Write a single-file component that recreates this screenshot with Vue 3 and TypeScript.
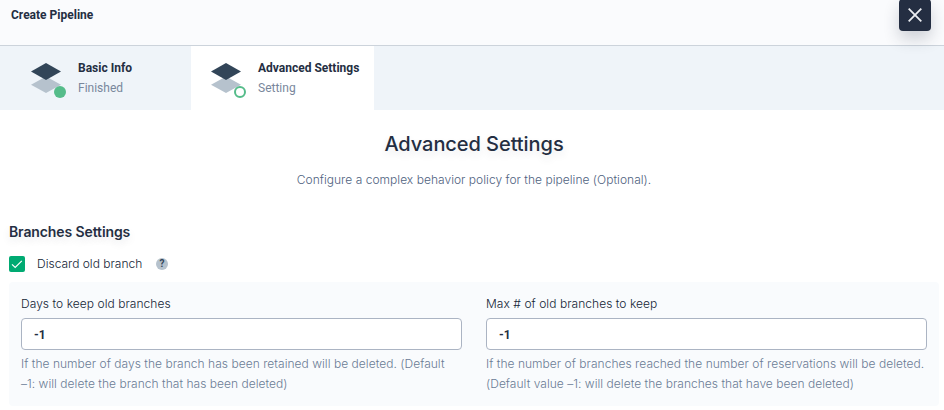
<script setup lang="ts">
import { ref } from 'vue'

interface Step {
  title: string
  status: string
  active: boolean
}

interface Field {
  label: string
  hint: string[]
}

const steps: Step[] = [
  { title: 'Basic Info', status: 'Finished', active: false },
  { title: 'Advanced Settings', status: 'Setting', active: true },
]

const fields: Field[] = [
  {
    label: 'Days to keep old branches',
    hint: [
      'If the number of days the branch has been retained will be deleted. (Default',
      '–1: will delete the branch that has been deleted)',
    ],
  },
  {
    label: 'Max # of old branches to keep',
    hint: [
      'If the number of branches reached the number of reservations will be deleted.',
      '(Default value –1: will delete the branches that have been deleted)',
    ],
  },
]

const values = ref<string[]>(['-1', '-1'])
const discard = ref(true)
</script>

<template>
  <div class="page">
    <header class="header">
      <span class="title">Create Pipeline</span>
      <button class="close" aria-label="Close">
        <svg width="32" height="32" viewBox="0 0 32 32">
          <path d="M9.7 9.7 22.3 22.3M22.3 9.7 9.7 22.3" fill="none" stroke="#eceef2" stroke-width="1.8" />
        </svg>
      </button>
    </header>

    <nav class="steps">
      <div v-for="step in steps" :key="step.title" class="step" :class="{ active: step.active }">
        <svg class="layers" width="40" height="40" viewBox="0 0 40 40">
          <path d="M20 13.4 35 21.8 20 30 5 21.8Z" fill="#b6c2cd" />
          <path d="M20 0 35 8.5 20 17 5 8.5Z" fill="#324558" />
          <circle v-if="step.active" cx="34" cy="29" r="5" fill="#fff" stroke="#55bc8a" stroke-width="2" />
          <circle v-else cx="34" cy="29" r="6" fill="#55bc8a" />
        </svg>
        <div class="step-text">
          <strong>{{ step.title }}</strong>
          <span>{{ step.status }}</span>
        </div>
      </div>
    </nav>

    <main class="content">
      <h1>Advanced Settings</h1>
      <p class="desc">Configure a complex behavior policy for the pipeline (Optional).</p>
      <h2>Branches Settings</h2>
      <div class="check-row" @click="discard = !discard">
        <span class="checkbox">
          <svg v-if="discard" width="16" height="16" viewBox="0 0 16 16">
            <path d="M3 8.4 6.2 11.5 12.8 4.9" fill="none" stroke="#fff" stroke-width="1.2" />
          </svg>
        </span>
        <span class="check-label">Discard old branch</span>
        <span class="help">?</span>
      </div>
      <section class="panel">
        <div v-for="(field, i) in fields" :key="field.label" class="field">
          <label>{{ field.label }}</label>
          <input v-model="values[i]" type="text" />
          <p class="hint">
            <span v-for="line in field.hint" :key="line">{{ line }}</span>
          </p>
        </div>
      </section>
    </main>
  </div>
</template>

<style>
body {
  background: #fff;
  overflow: hidden;
}
</style>

<style scoped>
.page {
  width: 944px;
  height: 410px;
  overflow: hidden;
  font-family: Inter, sans-serif;
  font-size: 12px;
  line-height: 20px;
  color: #242e42;
}
.header {
  display: flex;
  justify-content: space-between;
  box-sizing: border-box;
  height: 46px;
  padding: 0 13px 0 11px;
  background: #fafbfd;
  border-bottom: 1px solid #ccd3db;
}
.title {
  padding-top: 5px;
  font-family: Roboto, sans-serif;
  font-weight: 700;
}
.close {
  width: 32px;
  height: 32px;
  margin-top: -1px;
  padding: 0;
  border: 0;
  border-radius: 4px;
  background: #242e42;
  box-shadow: 0 8px 16px rgba(36, 46, 66, 0.2);
}
.close svg {
  display: block;
}
.steps {
  display: flex;
  height: 64px;
  background: #eff4f9;
}
.step {
  display: flex;
  box-sizing: border-box;
  width: 191px;
  padding: 12px 0 0 26px;
  font-family: Roboto, sans-serif;
}
.step.active {
  width: 183px;
  padding-left: 15px;
  background: #fff;
}
.layers {
  margin-top: 5px;
  flex: none;
}
.step-text {
  display: flex;
  flex-direction: column;
  margin-left: 12px;
  white-space: nowrap;
}
.step-text span {
  color: #79879c;
}
.content {
  padding: 18px 5px 0 9px;
}
h1 {
  margin: 0;
  font-size: 20px;
  font-weight: 500;
  line-height: 32px;
  letter-spacing: -0.06px;
  text-align: center;
  text-shadow: 0 4px 8px rgba(36, 46, 66, 0.1);
}
.desc {
  margin: 10px 0 0;
  text-align: center;
  font-weight: 300;
  letter-spacing: 0.03px;
  color: #4f6280;
}
h2 {
  margin: 32px 0 0;
  font-size: 14px;
  font-weight: 600;
  line-height: 20px;
  letter-spacing: -0.11px;
  text-shadow: 0 4px 8px rgba(36, 46, 66, 0.1);
}
.check-row {
  display: flex;
  align-items: center;
  height: 20px;
  margin-top: 12px;
}
.checkbox {
  width: 16px;
  height: 16px;
  border-radius: 2px;
  background: #00aa72;
}
.checkbox svg {
  display: block;
}
.check-label {
  width: 107px;
  margin-left: 12px;
  font-weight: 300;
  color: #141e36;
  white-space: nowrap;
}
.help {
  width: 12px;
  height: 12px;
  margin-left: 12px;
  border-radius: 50%;
  background: #b6c2cd;
  color: #324558;
  font: 700 10px/12px Roboto, sans-serif;
  text-align: center;
}
.panel {
  display: grid;
  grid-template-columns: 441px 441px;
  column-gap: 24px;
  box-sizing: border-box;
  height: 124px;
  margin-top: 8px;
  padding: 12px;
  border-radius: 4px;
  background: #f9fbfd;
}
.field {
  white-space: nowrap;
}
label {
  display: block;
  font-weight: 300;
  letter-spacing: 0.05px;
  color: #141e36;
}
input {
  display: block;
  box-sizing: border-box;
  width: 441px;
  height: 32px;
  margin: 4px 0;
  padding: 2px 12px 0;
  border: 1px solid #abb4c3;
  border-radius: 4px;
  outline: none;
  background: #fff;
  color: #242e42;
  font: 700 12px/20px Roboto, sans-serif;
}
.hint {
  margin: 0;
  font-weight: 300;
  letter-spacing: 0.035px;
  color: #6b7b95;
}
.hint span {
  display: block;
}
</style>
